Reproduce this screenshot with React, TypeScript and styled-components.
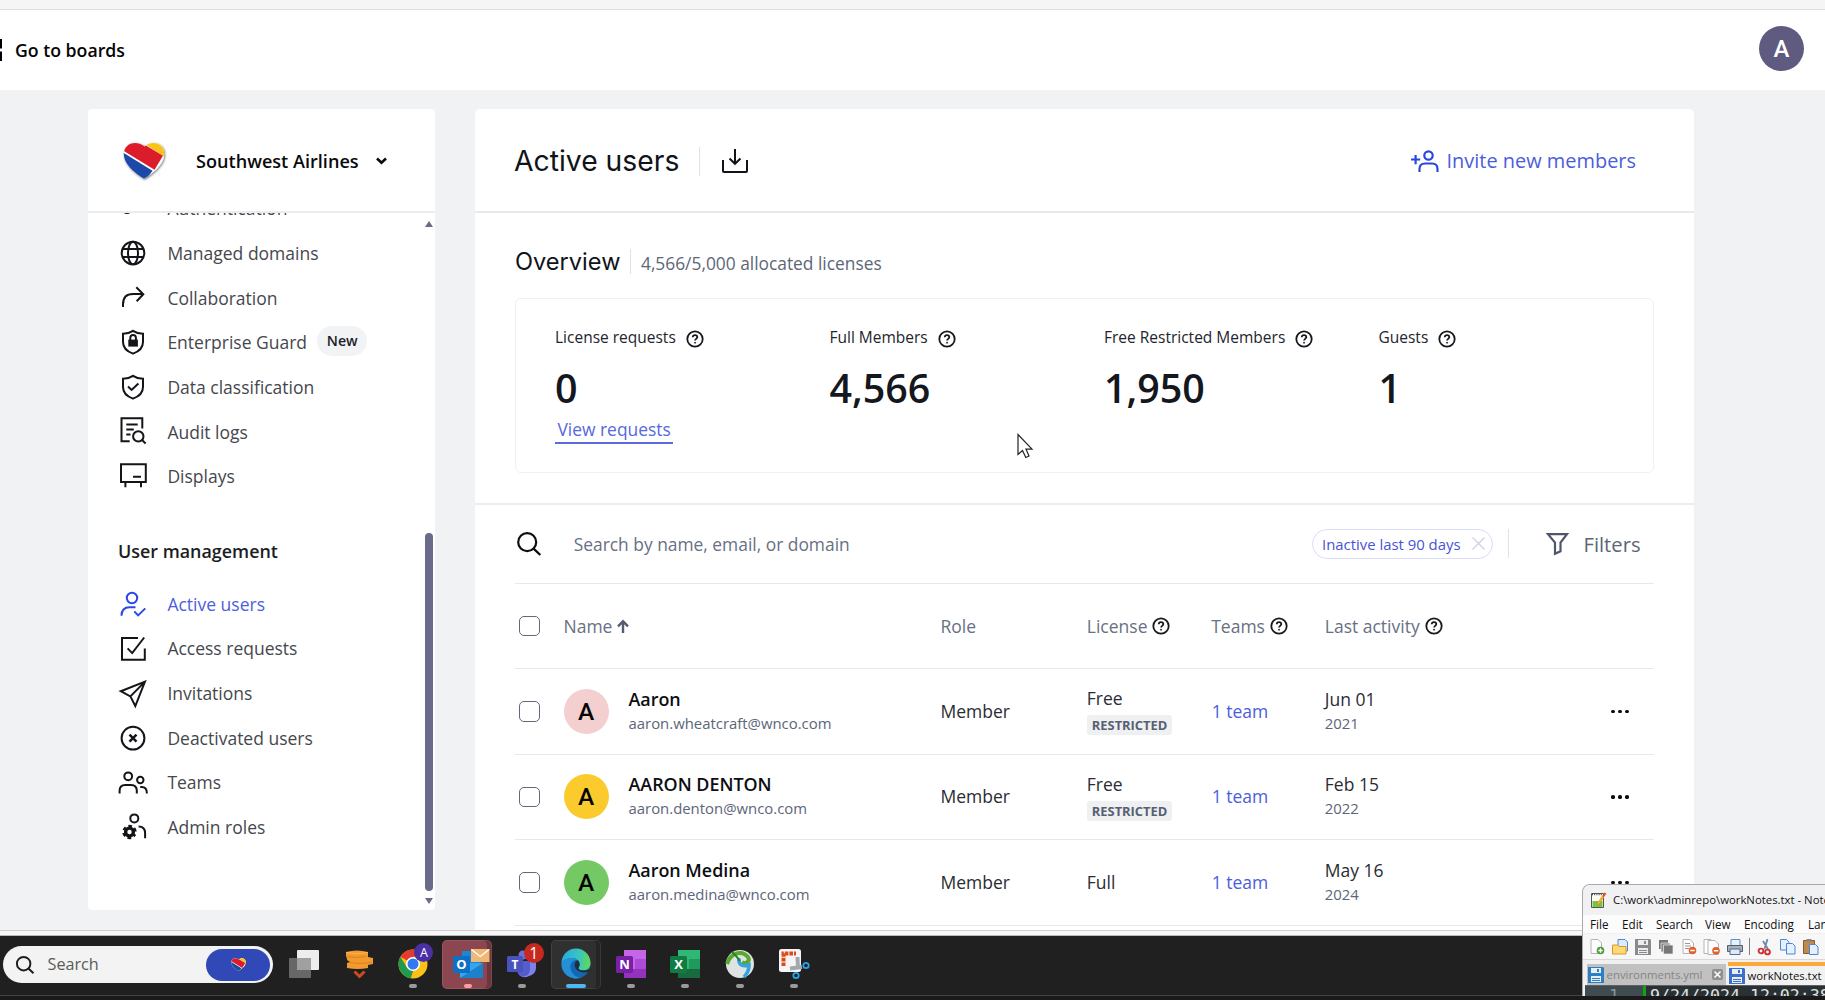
import React from 'react';
import styled, { createGlobalStyle } from 'styled-components';

const Global = createGlobalStyle`
  * { box-sizing: border-box; }
  html, body { margin: 0; padding: 0; overflow: hidden; }
  body {
    font-family: "Open Sans", "Noto Sans", sans-serif;
    font-size: 17.5px;
    line-height: 24px;
    color: #1b1d22;
    white-space: nowrap;
  }
  svg { display: block; flex: none; overflow: visible; }
`;

/* ---------- page shell ---------- */

const Screen = styled.div`
  position: relative;
  width: 1825px;
  height: 1000px;
  overflow: hidden;
  display: flex;
  flex-direction: column;
  background: #f0f2f4;
`;

const BrowserStrip = styled.div`
  flex: none;
  height: 10px;
  background: #f5f5f5;
  border-bottom: 1px solid #dedede;
`;

const TopBar = styled.header`
  flex: none;
  height: 80px;
  background: #fff;
  display: flex;
  align-items: center;
  justify-content: space-between;
  padding-right: 21px;
`;

const BoardsLink = styled.a`
  display: flex;
  align-items: center;
  gap: 13px;
  font-size: 17.7px;
  font-weight: 600;
  color: #050505;
`;

const UserAvatar = styled.div`
  width: 45px;
  height: 45px;
  margin-top: -3px;
  border-radius: 50%;
  background: #5f5a80;
  color: #fff;
  font: 500 24px/46px Roboto, sans-serif;
  text-align: center;
`;

const Workspace = styled.div`
  flex: none;
  height: 840px;
  overflow: hidden;
  display: flex;
  align-items: flex-start;
  gap: 40px;
  padding: 19px 0 0 88px;
`;

const WindowEdge = styled.div`
  flex: none;
  height: 6px;
  background: #f7f7f7;
  border-top: 1px solid #cfcfcf;
  border-bottom: 1px solid #b9b9b9;
`;

/* ---------- sidebar ---------- */

const Sidebar = styled.aside`
  width: 347px;
  height: 801px;
  background: #fff;
  border-radius: 4px;
  display: flex;
  flex-direction: column;
  overflow: hidden;
`;

const OrgHeader = styled.div`
  flex: none;
  height: 104px;
  border-bottom: 2px solid #ececee;
  display: flex;
  align-items: center;
  padding: 2px 0 0 35px;
`;

const OrgName = styled.span`
  margin: 0 17px 0 31px;
  font-size: 18.1px;
  font-weight: 600;
  color: #0a0a0c;
`;

const NavArea = styled.div`
  flex: 1;
  min-height: 0;
  overflow: hidden;
  display: flex;
  justify-content: space-between;
`;

const NavList = styled.nav`
  margin-top: -27px;
  padding-left: 30.7px;
`;

const NavItem = styled.a<{ $active?: boolean }>`
  height: 44.65px;
  display: flex;
  align-items: center;
  gap: 20.7px;
  font-size: 17.5px;
  color: ${p => (p.$active ? '#4c60dc' : '#45474d')};
  svg { color: ${p => (p.$active ? '#2a48e8' : '#141518')}; margin-top: -0.4px; }
`;

const NavHeading = styled.h3`
  margin: 0;
  padding: 41px 0 18px;
  height: 83px;
  font-size: 17.9px;
  line-height: 24px;
  font-weight: 600;
  margin-left: -0.7px;
`;

const NewBadge = styled.span`
  margin: -2px 0 0 -10.5px;
  padding: 0 9px 0 9.5px;
  height: 30px;
  border-radius: 15px;
  background: #f2f3f5;
  font-size: 14.2px;
  line-height: 29px;
  font-weight: 600;
  color: #1a1d28;
`;

const Scrollbar = styled.div`
  width: 10px;
  padding: 8px 2px 6px 0;
  display: flex;
  flex-direction: column;
  align-items: center;
`;

const ScrollTrack = styled.div`
  flex: 1;
  width: 8px;
  display: flex;
  align-items: flex-end;
  padding-bottom: 7px;
`;

const ScrollThumb = styled.div`
  width: 8px;
  height: 358px;
  border-radius: 4px;
  background: #6a6b88;
`;

/* ---------- main panel ---------- */

const Panel = styled.main`
  width: 1219px;
  height: 840px;
  background: #fff;
  border-radius: 5px 5px 0 0;
`;

const PanelHeader = styled.div`
  height: 104px;
  border-bottom: 2px solid #e9e9eb;
  padding: 2px 58px 0 39px;
  display: flex;
  align-items: center;
`;

const Title = styled.h1`
  margin: 0;
  font: 400 28.3px/36px Inter, sans-serif;
  color: #10131a;
`;

const Divider = styled.span<{ $h: number; $l: number; $r: number }>`
  width: 1px;
  height: ${p => p.$h}px;
  margin: 0 ${p => p.$r}px 0 ${p => p.$l}px;
  background: #e0e1e5;
`;

const InviteButton = styled.a`
  margin-left: auto;
  display: flex;
  align-items: center;
  gap: 7.5px;
  font-size: 19.95px;
  color: #4a5edb;
`;

const OverviewHead = styled.div`
  height: 85px;
  padding: 12px 0 0 40px;
  display: flex;
  align-items: center;
  color: #5d6678;
`;

const Subtitle = styled.h2`
  margin: 0;
  font: 400 23.6px/30px Inter, sans-serif;
  color: #10131a;
`;

const Allocated = styled.span`
  padding-top: 2px;
  font-size: 17.35px;
`;

const StatsCard = styled.section`
  margin-left: 39.5px;
  width: 1139px;
  height: 175px;
  border: 1.5px solid #eff0f2;
  border-radius: 6px;
  display: grid;
  grid-template-columns: repeat(4, 274.5px);
  padding: 27px 0 0 39.5px;
`;

const StatLabel = styled.div`
  display: flex;
  align-items: center;
  gap: 10px;
  font-size: 15.5px;
  line-height: 22px;
  color: #22252d;
  svg { margin-top: 3px; }
`;

const StatValue = styled.div`
  margin-top: 13px;
  font-size: 39.4px;
  line-height: 54px;
  font-weight: 600;
  color: #14171d;
`;

const StatLink = styled.a`
  display: inline-block;
  margin-top: 3px;
  height: 26px;
  padding: 0 2px 0 2.5px;
  border-bottom: 2px solid #5a6ae0;
  font-size: 17.4px;
  line-height: 23px;
  color: #5668dd;
`;

const FilterBar = styled.div`
  margin-top: 30px;
  height: 80px;
  padding: 0 0 1px 42px;
  border-top: 2px solid #ededef;
  display: flex;
  align-items: center;
  color: #5d6579;
`;

const Placeholder = styled.span`
  margin-left: 32.7px;
  font-size: 17.4px;
  color: #687083;
`;

const Chip = styled.span`
  margin-left: auto;
  width: 181px;
  height: 30px;
  border: 1.5px solid #dadcf8;
  border-radius: 15px;
  padding-left: 8.5px;
  display: flex;
  align-items: center;
  gap: 11px;
  font-size: 14.9px;
  color: #4753d6;
`;

const FiltersLabel = styled.span`
  margin: 0 53.500px 0 14px;
  font-size: 20.2px;
`;

const Table = styled.div`
  margin-left: 39.5px;
  width: 1139.5px;
`;

const Row = styled.div<{ $head?: boolean }>`
  height: 85.4px;
  border-top: 1.5px solid #e7e8ea;
  display: grid;
  align-items: center;
  grid-template-columns: 49px 377px 146.3px 124.4px 113.6px 1fr;
  color: ${p => (p.$head ? '#687083' : '#2a2c33')};
`;

const Checkbox = styled.span`
  margin-left: 4.5px;
  width: 20.5px;
  height: 20.5px;
  border: 1.6px solid #65667e;
  border-radius: 5px;
`;

const Label = styled.span`
  display: flex;
  align-items: center;
  gap: 5px;
`;

const Cell = styled.span`
  margin-top: -1.5px;
`;

const Person = styled.div`
  display: flex;
  align-items: center;
  gap: 20px;
`;

const Initial = styled.span<{ $bg: string }>`
  width: 45px;
  height: 45px;
  border-radius: 50%;
  background: ${p => p.$bg};
  color: #060606;
  font: 500 24.5px/46px Roboto, sans-serif;
  text-align: center;
`;

const Stack = styled.div`
  display: flex;
  flex-direction: column;
  align-items: flex-start;
  margin-top: -1.5px;
`;

const Name = styled.span`
  font-size: 17.9px;
  font-weight: 600;
  color: #0c0e12;
`;

const Muted = styled.span`
  font-size: 14.9px;
  color: #5c6579;
`;

const Tag = styled.span`
  margin-top: 5px;
  height: 20px;
  padding: 0 5px;
  border-radius: 3px;
  background: #eff0f2;
  font-size: 12.9px;
  line-height: 20px;
  font-weight: 700;
  color: #566072;
`;

const TeamLink = styled.a`
  color: #4a5edc;
  padding-left: 0.5px;
  margin-top: -1.5px;
`;

const LastCell = styled.div`
  display: flex;
  align-items: center;
  justify-content: space-between;
  padding-right: 25.5px;
`;

const Dots = styled.span`
  display: flex;
  gap: 3px;
  i { width: 3.7px; height: 3.7px; border-radius: 50%; background: #0b0b0d; }
`;

/* ---------- taskbar ---------- */

const Taskbar = styled.footer`
  flex: none;
  height: 64px;
  background: #202020;
  display: flex;
  align-items: flex-start;
  padding: 0 0 0 3px;
  border-bottom: 4px solid #1a1a1a;
  box-shadow: inset 0 -1px #444;
`;

const SearchPill = styled.div`
  margin-top: 10px;
  width: 270px;
  height: 37px;
  border-radius: 18.5px;
  background: #f3f3f3;
  display: flex;
  align-items: center;
  padding: 0 3px 0 13px;
  font-size: 16.2px;
  color: #5a5a5a;
  span { margin-left: 13.5px; margin-top: -1px; }
`;

const PillArt = styled.div`
  margin-left: auto;
  width: 64px;
  height: 32px;
  border-radius: 16px;
  background: #3149b6;
  display: flex;
  align-items: center;
  justify-content: center;
`;

const Apps = styled.div`
  display: flex;
  margin: 3px 0 0 4px;
`;

const AppSlot = styled.div<{ $tile?: string }>`
  position: relative;
  width: 54.45px;
  height: 52px;
  display: flex;
  flex-direction: column;
  align-items: center;
  padding: 10px 0 0;
  ${p => p.$tile && `
    &::before {
      content: ''; position: absolute; left: 2px; top: 1px; width: 50px; height: 49px;
      border-radius: 5px; background: ${p.$tile};
      box-shadow: inset 0 0 0 1px rgba(255,255,255,.09), inset -5px 0 rgba(0,0,0,.22);
    }
  `}
  svg { position: relative; }
`;

const Indicator = styled.i<{ $w: number; $c: string }>`
  position: relative;
  margin-top: 5px;
  width: ${p => p.$w}px;
  height: 4px;
  border-radius: 2px;
  background: ${p => p.$c};
`;

const AppBadge = styled.span<{ $bg: string; $x: number; $y: number; $s: number; $f: number }>`
  position: absolute;
  left: ${p => p.$x}px;
  top: ${p => p.$y}px;
  width: ${p => p.$s}px;
  height: ${p => p.$s}px;
  border-radius: 50%;
  background: ${p => p.$bg};
  color: #fff;
  text-align: center;
  font-size: ${p => p.$f}px;
  line-height: ${p => p.$s}px;
`;

/* ---------- floating editor window ---------- */

const EditorWindow = styled.div`
  position: absolute;
  left: 1582px;
  top: 884px;
  width: 400px;
  height: 112px;
  border: 1px solid #a9a9ad;
  border-bottom: 0;
  border-radius: 8px 0 0 0;
  overflow: hidden;
  background: #f0f0f0;
  display: flex;
  flex-direction: column;
  color: #111;
`;

const WinTitle = styled.div`
  flex: none;
  height: 30px;
  background: #f1f1f3;
  display: flex;
  align-items: center;
  gap: 6px;
  padding-left: 7px;
  font-size: 11.35px;
`;

const WinMenu = styled.div`
  flex: none;
  height: 18px;
  background: #fcfcfc;
  display: flex;
  align-items: center;
  padding-left: 7px;
  font-size: 11.7px;
  line-height: 18px;
`;

const MenuItem = styled.span<{ $w: number }>`
  width: ${p => p.$w}px;
`;

const WinTools = styled.div`
  flex: none;
  height: 26px;
  margin-top: 1px;
  background: #f7f7f7;
  border-bottom: 1px solid #d8d8d8;
  display: flex;
  align-items: center;
  gap: 7px;
  padding-left: 6px;
`;

const ToolSeparator = styled.i`
  width: 1px;
  height: 17px;
  background: #808080;
  margin: 0 0 0 -1px;
`;

const WinTabs = styled.div`
  flex: none;
  height: 25px;
  padding: 2px 0 0 3.5px;
  display: flex;
  align-items: flex-end;
  gap: 2px;
`;

const Tab = styled.div<{ $on?: boolean }>`
  flex: none;
  height: ${p => (p.$on ? 23 : 21)}px;
  padding: 0 2.5px 0 1px;
  width: ${p => (p.$on ? 260 : 139)}px;
  border-top: ${p => (p.$on ? '4px solid #fba93b' : '0')};
  background: ${p => (p.$on ? '#f1f1f1' : '#c1c1c1')};
  color: ${p => (p.$on ? '#111' : '#858585')};
  display: flex;
  align-items: center;
  gap: 3px;
  font-size: ${p => (p.$on ? 11.3 : 11.4)}px;
`;

const CloseBox = styled.i`
  margin-left: auto;
  width: 11px;
  height: 11px;
  border-radius: 2px;
  background: #8f8f8f;
  display: grid;
  place-items: center;
`;

const Code = styled.div`
  flex: none;
  height: 12px;
  margin-left: 2px;
  border-top: 1px solid #606060;
  background: #293134;
  overflow: hidden;
  display: flex;
  font: 16.6px/20px "DejaVu Sans Mono", monospace;
  color: #e0e2e4;
`;

const Gutter = styled.span`
  width: 61px;
  border-right: 3px solid #12a312;
  background: #3f4b4e;
  color: #81969a;
  padding-left: 24px;
  margin-right: 4px;
`;

/* ---------- drawings ---------- */

const Icon = ({ children, s = 28, w = 2, h }: { children: React.ReactNode; s?: number; w?: number; h?: number }) => (
  <svg width={s} height={h ?? s} viewBox={`0 0 ${s} ${h ?? s}`} fill="none" stroke="currentColor" strokeWidth={w}>
    {children}
  </svg>
);

const SHIELD = 'M14 2.8C17 4.8 20.5 5.7 24 5.7V14c0 6-4 9.5-10 11.6C8 23.5 4 20 4 14V5.7C7.5 5.7 11 4.8 14 2.8Z';

const icons: Record<string, React.ReactNode> = {
  key: <><circle cx="8" cy="14.5" r="4.6" /><path d="M11 12 21 2" /></>,
  globe: <><circle cx="14" cy="14" r="11.3" /><ellipse cx="14" cy="14" rx="5" ry="11.3" /><path d="M3.4 10h21.2M3.4 18h21.2" /></>,
  share: <path d="M4 24v-2.6C4 14.5 7.6 11 14 11h10.4M17.3 4.3l7 6.9-6.6 7" />,
  guard: <><path d={SHIELD} /><path d="M9.3 11.6h9.6v7H9.3z" fill="currentColor" stroke="none" /><path d="M11.3 12V9.8a2.8 2.8 0 0 1 5.6 0V12" /></>,
  shield: <><path d={SHIELD} /><path d="M9 13.6l3.6 3.4 6.8-6.4" /></>,
  audit: <><path d="M23.3 11.5V1.3H2.5v22.9h8.2M7.3 7.6h11.4M7.3 12.4h7.5M7.3 17.6h4.2" /><circle cx="19.3" cy="19.4" r="5.2" /><path d="M23 23l3.6 3.4" /></>,
  display: <path d="M2 2.2h24.8v17.7H2zM6.4 20v5.2M22 20v5.2M14 14.7h8" />,
  active: <><circle cx="13" cy="8" r="5.2" /><path d="M2.5 25.8c0-5.6 3.1-8.5 8-8.5h6M15.3 21.4l3.8 4 7.2-7" /></>,
  access: <path d="M19 3.9H3v21.9h22.8V14.6M8.6 14.4l4.6 4.7L25.2 3.5" />,
  send: <path d="M26 2.6 1.8 12.2l9.6 5.2 4.9 9.6zM11.4 17.4 26 2.6" />,
  deact: <><circle cx="14" cy="14.2" r="11.4" /><path d="M10.5 10.7l7 7M17.5 10.7l-7 7" strokeWidth="2.5" /></>,
  teams: <><circle cx="9.2" cy="8.3" r="3.9" /><path d="M.6 25.4v-2.6c0-3.7 2.2-5.9 5.6-5.9h6c3.4 0 5.6 2.2 5.6 5.9v2.6" /><circle cx="21.3" cy="12" r="3.2" /><path d="M21.2 19h1.4c3.4 0 5.3 2.2 5.3 6.4" /></>,
  admin: <><circle cx="15.3" cy="5.4" r="4" /><path d="M19.6 13.4c4.4 0 6.5 2.2 6.5 6.6v5.2" /><circle cx="10.5" cy="19" r="3.9" strokeWidth="3.4" /><circle cx="10.5" cy="19" r="6" strokeWidth="2.4" strokeDasharray="3.5 2.783" strokeDashoffset="1.75" transform="rotate(30 10.5 19)" /></>,
};

const Heart = ({ w }: { w: number }) => (
  <svg width={w} height={w * 0.9} viewBox="0 0 42 37.5">
    <defs>
      <clipPath id={`heart${w}`}>
        <path d="M21 36.500C14 32 1.500 23.500 .8 12.500 .6 5.500 5.500 .8 12 .8c3.800 0 7 1.200 9.500 3.600C24 2 27 .8 30.500 .8c6 0 10.800 4.200 10.700 11.200C41 23.500 28 32 21 36.500Z" />
      </clipPath>
      <filter id={`shade${w}`} x="-20%" y="-20%" width="140%" height="140%">
        <feDropShadow dx=".8" dy=".9" stdDeviation=".8" floodColor="#555" floodOpacity=".8" />
      </filter>
    </defs>
    <g filter={`url(#shade${w})`}>
      <g clipPath={`url(#heart${w})`}>
        <path fill="#fff" d="M0 0h42v38H0z" />
        <path fill="#fbc314" d="M16-2h28v18L22 2z" />
        <path fill="#dc1f2b" d="M-4-4h20L22.500 3 40 13.500 31.500 27.500 0 8.300z" />
        <path fill="#1c49a8" d="M-2 9 29.500 28.500 21 40-3 28z" />
      </g>
    </g>
  </svg>
);

const Help = ({ s = 18 }: { s?: number }) => (
  <svg width={s} height={s} viewBox="0 0 18 18" fill="none" stroke="#16181c" strokeWidth="1.8">
    <circle cx="9" cy="9" r="7.7" />
    <path d="M6.700 7.300c.1-1.400 1-2.200 2.300-2.200s2.300.8 2.300 2c0 1.700-2.200 1.800-2.200 3.400" />
    <circle cx="9.050" cy="12.700" r=".55" fill="#16181c" strokeWidth=".9" />
  </svg>
);

const Magnifier = ({ s, c = '#0c0d10', w = 2.2 }: { s: number; c?: string; w?: number }) => (
  <svg width={s} height={s} viewBox="0 0 24 24" fill="none" stroke={c} strokeWidth={w}>
    <circle cx="10.200" cy="10.200" r="9" />
    <path d="M16.600 16.600 23.300 23" />
  </svg>
);

const Triangle = ({ down }: { down?: boolean }) => (
  <svg width="8" height="6" viewBox="0 0 8 6"><path fill="#6a6b88" d={down ? 'M0 0h8L4 6z' : 'M0 6h8L4 0z'} /></svg>
);

const OfficeIcon = ({ letter, a, b, c, d }: { letter: string; a: string; b: string; c: string; d: string }) => (
  <svg width="30" height="30" viewBox="0 0 30 30">
    <path fill={b} d="M8 1h22v28H8z" /><path fill={c} d="M19 10h11v10H19z" /><path fill={d} d="M8 20h22v9H8z" />
    <rect y="7" width="17" height="17" rx="1.500" fill={a} />
    <text x="8.500" y="20" textAnchor="middle" fontSize="13" fontWeight="700" fill="#fff">{letter}</text>
  </svg>
);

const taskIcons = {
  view: <svg width="30" height="30" viewBox="0 0 30 30"><rect x="8" y="1" width="22" height="20" rx="1" fill="#ededed" /><rect x="0" y="9" width="22" height="20" rx="1" fill="#6f6f6f" opacity=".9" /><path fill="#a0a0a0" d="M8 9h14v12H8z" /></svg>,
  stack: <svg width="30" height="30" viewBox="0 0 30 30"><path fill="#f29a2e" d="M2 3q11-3 22 0v5l5 1v6l-5 1v3q-10 2-21 0v-5l3-1-3-2V9l-1-1z" /><path d="M2 7.500q9 2 20 0M5 13.500q12 2 23 0" stroke="#d98220" strokeWidth="1" fill="none" /><path d="M2 3.500q11 2.500 22 0" stroke="#ffb551" fill="none" /><path d="m10.500 22.500 5 5 5-5" stroke="#cf4a1c" strokeWidth="3" fill="none" /></svg>,
  chrome: <svg width="30" height="30" viewBox="0 0 30 30"><circle cx="15" cy="15" r="14.500" fill="#fbc116" /><path fill="#e33b2e" d="M15 15 2.400 7.800A14.500 14.500 0 0 1 27.600 7.800H15z" /><path fill="#229a4c" d="M2.400 7.800 9 18.500l6 3.500-2.200 7.300A14.500 14.500 0 0 1 2.400 7.800z" /><circle cx="15" cy="15" r="7" fill="#fff" /><circle cx="15" cy="15" r="5.500" fill="#2f7af0" /></svg>,
  outlook: <svg width="30" height="30" viewBox="0 0 30 30"><path fill="#1a86d6" d="M9 2h18v12H9z" /><path fill="#32a7ec" d="M7 14h23v15H7z" /><path fill="#1474c0" d="m7 29 23-15v15z" opacity=".75" /><rect y="7" width="17" height="17" rx="1.500" fill="#0f6fc4" /><text x="8.500" y="20" textAnchor="middle" fontSize="13" fontWeight="700" fill="#fff">O</text><path fill="#efb877" d="M18 0h18.500v13H18z" /><path d="m18.500.500 8.700 7 8.800-7" stroke="#fff" strokeWidth="1.300" fill="none" /></svg>,
  teams: <svg width="30" height="30" viewBox="0 0 30 30"><circle cx="16" cy="6" r="4.500" fill="#6b70d8" /><path fill="#7b83eb" d="M10 12h19v7a8 8 0 0 1-7 8q-5 3-10-1z" /><path fill="#565dc8" d="M10 12h13v9q-1 6-7 6.500-6-1-6-7z" /><rect y="7" width="16" height="16" rx="1.500" fill="#4a52bd" /><text x="8" y="19.500" textAnchor="middle" fontSize="12" fontWeight="700" fill="#fff">T</text></svg>,
  edge: <svg width="30" height="30" viewBox="0 0 30 30"><defs><linearGradient id="edgeTop" x1="0" x2="1" y1=".3" y2=".4"><stop stopColor="#2aa7e0" /><stop offset=".6" stopColor="#38c5c0" /><stop offset="1" stopColor="#62d957" /></linearGradient></defs><circle cx="15" cy="15" r="14.500" fill="#1467b3" /><path fill="url(#edgeTop)" d="M.5 14A14.500 14.500 0 0 1 29.500 14c0 5-3.500 7.500-7.500 7.500-3 0-4.500-1.200-4.500-2.300 0-1 1.200-1.500 1.200-3.700C18.700 12 15.500 9 11 9 6 9 2 11.500.5 14z" /><path fill="#2390d8" d="M.5 14C2 11.500 6 9 11 9c2 0 4 .7 5.300 1.800C11 11 9 15.500 9.500 19c.6 5 4.500 9 10 9.800A14.500 14.500 0 0 1 .5 14z" /><path fill="#202020" d="M17.500 19.200c0-1 1.200-1.500 1.200-3.700 0-1.500-.6-3-1.700-4.200-3 .7-4 4.200-3 6.700 1.300 4.500 8.500 7 14.500 4.500l1-2.500c-2 .8-11 3-12-.8z" opacity=".8" /></svg>,
  globe: <svg width="30" height="30" viewBox="0 0 30 30"><circle cx="15" cy="15" r="14" fill="#dfe3e2" /><path d="M2 15C6 3 17 1 23 8c2.500 4-2 8-6 5" fill="none" stroke="#5aa82c" strokeWidth="4" /><path d="M14 9c-1 7 4 9 10 7 0 5-2 9-5 12" fill="none" stroke="#35a4de" strokeWidth="3.600" /><path d="M7 3q4 3 8 9" stroke="#2f7d24" strokeWidth="2" fill="none" /></svg>,
  snip: <svg width="30" height="30" viewBox="0 0 30 30"><rect width="22" height="23" rx="2.500" fill="#f5f5f5" /><path d="M4.500 17V4.500H17" fill="none" stroke="#dd4a1d" strokeWidth="4" strokeDasharray="3.600 1" /><path d="m18.500 8 .5 12M11 19.500l12-1.500" stroke="#a3a8ad" strokeWidth="4" /><circle cx="17" cy="26.500" r="2.700" fill="none" stroke="#2ba3e8" strokeWidth="1.800" /><circle cx="27" cy="16.500" r="2.700" fill="none" stroke="#2ba3e8" strokeWidth="1.800" /></svg>,
};

const Tool = ({ children }: { children: React.ReactNode }) => <svg width="16" height="16" viewBox="0 0 16 16">{children}</svg>;
const Page = ({ x = 2, y = 0 }: { x?: number; y?: number }) => <path d={`M${x} ${y + 0.5}h7l3.500 3.500v10.500h-10.500z`} fill="#fdfdfd" stroke="#b4b4b4" />;
const Floppy = ({ c }: { c: string }) => <Tool><path fill={c} d="M0 0h15l1 1v15H0z" /><path fill="#e9edf2" d="M3 1h10v5H3zM3 9h10v6H3z" /><path fill={c} d="M9 2h2v3H9zM4 11h8v1H4zM4 13h8v1H4z" /></Tool>;

const tools = [
  <Tool><Page /><circle cx="11.500" cy="11.500" r="3.800" fill="#4b9b3d" /><path d="M11.500 9.300v4.400M9.300 11.500h4.400" stroke="#fff" strokeWidth="1.300" /></Tool>,
  <Tool><path d="M6 .5h7l2.500 2.500v9H6z" fill="#dceafb" stroke="#4f86d0" /><path d="M.5 6h5l1.500 1.500h7V15H.5z" fill="#ffd978" stroke="#d89b1d" /></Tool>,
  <Floppy c="#8a8a8a" />,
  <Tool><path d="M1 1h9v9H1z" fill="#777" /><path d="M3 4h9v9H3z" fill="#8a8a8a" stroke="#eee" strokeWidth=".7" /><path d="M5.500 6h9.500v9H5.500z" fill="#777" stroke="#eee" strokeWidth=".7" /></Tool>,
  <Tool><Page /><path d="M4 4.500h5M4 7h6M4 9.500h4" stroke="#999" /><circle cx="11.500" cy="11.500" r="3.800" fill="#e2602a" /><path d="M9.300 11.500h4.400" stroke="#fff" strokeWidth="1.500" /></Tool>,
  <Tool><Page x={0} /><Page x={4} y={1} /><circle cx="12" cy="11.800" r="3.800" fill="#e2602a" /><path d="M9.800 11.800h4.400" stroke="#fff" strokeWidth="1.500" /></Tool>,
  <Tool><path d="M4 .5h9v6H4z" fill="#e7f1ff" stroke="#5f8fc9" /><path d="M.5 6.500h15v6H.5z" fill="#a9b0b8" stroke="#555d66" /><path d="M3 10h10v5.500H3z" fill="#dfe9f8" stroke="#4f6f9c" /></Tool>,
];
const editTools = [
  <Tool><path d="m10.500 0-3 10M6 2l5 8" stroke="#6d88ad" strokeWidth="1.800" /><circle cx="4" cy="12" r="2.400" fill="none" stroke="#cf3030" strokeWidth="1.900" /><circle cx="10.500" cy="13" r="2.400" fill="none" stroke="#cf3030" strokeWidth="1.900" /></Tool>,
  <Tool><path d="M.5.500h6l2.500 2.500v8H.5z" fill="#e4efff" stroke="#4f86d0" /><path d="M6.500 4.500h6l2.500 2.500v8H6.500z" fill="#e4efff" stroke="#4f86d0" /></Tool>,
  <Tool><path d="M.5 1.500h11v13H.5z" fill="#c08a4c" stroke="#8a5a28" /><path d="M3.500 0h5v3h-5z" fill="#888" /><path d="M6.500 5.500h6l2.500 2.500v7.500H6.500z" fill="#e4efff" stroke="#4f86d0" /></Tool>,
];

/* ---------- data ---------- */

const security = [
  ['key', 'Authentication'], ['globe', 'Managed domains'], ['share', 'Collaboration'], ['guard', 'Enterprise Guard'],
  ['shield', 'Data classification'], ['audit', 'Audit logs'], ['display', 'Displays'],
];
const management = [
  ['active', 'Active users'], ['access', 'Access requests'], ['send', 'Invitations'],
  ['deact', 'Deactivated users'], ['teams', 'Teams'], ['admin', 'Admin roles'],
];
const stats = [
  ['License requests', '0'], ['Full Members', '4,566'], ['Free Restricted Members', '1,950'], ['Guests', '1'],
];
const users = [
  { name: 'Aaron', email: 'aaron.wheatcraft@wnco.com', bg: '#f3cfd0', license: 'Free', restricted: true, date: 'Jun 01', year: '2021' },
  { name: 'AARON DENTON', email: 'aaron.denton@wnco.com', bg: '#fbca2c', license: 'Free', restricted: true, date: 'Feb 15', year: '2022' },
  { name: 'Aaron Medina', email: 'aaron.medina@wnco.com', bg: '#74c965', license: 'Full', restricted: false, date: 'May 16', year: '2024' },
];

const Cursor = styled.svg`
  position: absolute;
  left: 1017px;
  top: 433px;
`;

export default function App() {
  return (
    <Screen>
      <Global />
      <BrowserStrip />
      <TopBar>
        <BoardsLink>
          <svg width="2" height="22" viewBox="0 0 2 22"><path d="M0 0h2v9.500H0zM0 12.500h2V22H0z" /></svg>
          Go to boards
        </BoardsLink>
        <UserAvatar>A</UserAvatar>
      </TopBar>
      <Workspace>
        <Sidebar>
          <OrgHeader>
            <Heart w={42} />
            <OrgName>Southwest Airlines</OrgName>
            <svg width="11" height="8" viewBox="0 0 11 8" fill="none" stroke="#0a0a0c" strokeWidth="2.6"><path d="m1 1.500 4.500 4.300L10 1.500" /></svg>
          </OrgHeader>
          <NavArea>
            <NavList>
              {security.map(([icon, text]) => (
                <NavItem key={text}>
                  <Icon>{icons[icon]}</Icon>{text}
                  {icon === 'guard' && <NewBadge>New</NewBadge>}
                </NavItem>
              ))}
              <NavHeading>User management</NavHeading>
              {management.map(([icon, text]) => (
                <NavItem key={text} $active={icon === 'active'}><Icon>{icons[icon]}</Icon>{text}</NavItem>
              ))}
            </NavList>
            <Scrollbar>
              <Triangle />
              <ScrollTrack><ScrollThumb /></ScrollTrack>
              <Triangle down />
            </Scrollbar>
          </NavArea>
        </Sidebar>

        <Panel>
          <PanelHeader>
            <Title>Active users</Title>
            <Divider $h={29} $l={20} $r={21.5} />
            <Icon s={26} h={24} w={2}><path d="M1 11v11q0 1 1 1h22q1 0 1-1V11M13 0v14.500M7.500 9.500l5.500 5.300 5.500-5.300" stroke="#111318" /></Icon>
            <InviteButton>
              <Icon s={28} h={22} w={2.2}><g stroke="#2a46e2"><path d="M0 9.500h9.200M4.600 5v9.200M8.500 22v-3c0-3.600 2-5.500 5.500-5.500h7c3.500 0 5.500 1.900 5.500 5.500v3" /><circle cx="17.500" cy="5.500" r="4.200" /></g></Icon>
              Invite new members
            </InviteButton>
          </PanelHeader>
          <OverviewHead>
            <Subtitle>Overview</Subtitle>
            <Divider $h={25} $l={10} $r={9.5} />
            <Allocated>4,566/5,000 allocated licenses</Allocated>
          </OverviewHead>
          <StatsCard>
            {stats.map(([label, value], i) => (
              <div key={label}>
                <StatLabel>{label}<Help /></StatLabel>
                <StatValue>{value}</StatValue>
                {i === 0 && <StatLink>View requests</StatLink>}
              </div>
            ))}
          </StatsCard>
          <FilterBar>
            <Magnifier s={24} />
            <Placeholder>Search by name, email, or domain</Placeholder>
            <Chip>
              Inactive last 90 days
              <svg width="13" height="13" viewBox="0 0 13 13" stroke="#cfd1ec" strokeWidth="1.400"><path d="m.5.500 12 12M12.500.500l-12 12" /></svg>
            </Chip>
            <Divider $h={29} $l={15} $r={37} />
            <svg width="23" height="22" viewBox="0 0 23 22" fill="none" stroke="#4f566c" strokeWidth="2.200"><path d="M2 1.200h19L14.500 9.600v8.600l-5.500 2.500V9.600z" /></svg>
            <FiltersLabel>Filters</FiltersLabel>
          </FilterBar>
          <Table>
            <Row $head>
              <Checkbox />
              <Label>
                Name
                <svg width="12" height="13" viewBox="0 0 12 13" fill="none" stroke="#555c70" strokeWidth="2.400"><path d="M6 13V1.500M1 6.300l5-5 5 5" /></svg>
              </Label>
              <Label>Role</Label>
              <Label>License <Help /></Label>
              <Label>Teams <Help /></Label>
              <Label>Last activity <Help /></Label>
            </Row>
            {users.map(u => (
              <Row key={u.name}>
                <Checkbox />
                <Person>
                  <Initial $bg={u.bg}>A</Initial>
                  <Stack><Name>{u.name}</Name><Muted>{u.email}</Muted></Stack>
                </Person>
                <Cell>Member</Cell>
                <Stack>{u.license}{u.restricted && <Tag>RESTRICTED</Tag>}</Stack>
                <TeamLink>1 team</TeamLink>
                <LastCell>
                  <Stack>{u.date}<Muted>{u.year}</Muted></Stack>
                  <Dots><i /><i /><i /></Dots>
                </LastCell>
              </Row>
            ))}
            <Row />
          </Table>
        </Panel>
      </Workspace>
      <WindowEdge />

      <Taskbar>
        <SearchPill>
          <Magnifier s={18} c="#1c1c1c" w={2.6} />
          <span>Search</span>
          <PillArt><Heart w={15} /></PillArt>
        </SearchPill>
        <Apps>
          <AppSlot>{taskIcons.view}</AppSlot>
          <AppSlot>{taskIcons.stack}</AppSlot>
          <AppSlot>{taskIcons.chrome}<Indicator $w={8} $c="#9a9a9a" /><AppBadge $bg="#4a2fa5" $x={28.5} $y={4} $s={19} $f={12.5}>A</AppBadge></AppSlot>
          <AppSlot $tile="#8c4650">{taskIcons.outlook}<Indicator $w={8} $c="#ff9aa5" /></AppSlot>
          <AppSlot>{taskIcons.teams}<Indicator $w={8} $c="#9a9a9a" /><AppBadge $bg="#c8281e" $x={29} $y={4} $s={20} $f={16}>1</AppBadge></AppSlot>
          <AppSlot $tile="#303030">{taskIcons.edge}<Indicator $w={20} $c="#4db8f5" /></AppSlot>
          <AppSlot><OfficeIcon letter="N" a="#7a1fa8" b="#c666e6" c="#ae4bd5" d="#9332bf" /><Indicator $w={8} $c="#9a9a9a" /></AppSlot>
          <AppSlot><OfficeIcon letter="X" a="#107c41" b="#2fb873" c="#1f9a5c" d="#1a6a40" /><Indicator $w={8} $c="#9a9a9a" /></AppSlot>
          <AppSlot>{taskIcons.globe}<Indicator $w={8} $c="#9a9a9a" /></AppSlot>
          <AppSlot>{taskIcons.snip}<Indicator $w={8} $c="#9a9a9a" /></AppSlot>
        </Apps>
      </Taskbar>

      <Cursor width="17" height="26" viewBox="0 0 17 26"><path d="M1 1.500v20l4.500-4 3.300 7 3.200-1.500-3-6.800h6z" fill="#fff" stroke="#222" strokeWidth="1.200" /></Cursor>

      <EditorWindow>
        <WinTitle>
          <svg width="17" height="17" viewBox="0 0 17 17"><path d="M1.500 1.500h12v14h-12z" fill="#fbfbf4" stroke="#555" /><path d="M2.500 9h10v6h-10z" fill="#7cc142" /><path d="M2 2.500h11" stroke="#444" strokeDasharray="1 1.200" strokeWidth="1.500" /><path d="m8 12 7.500-11" stroke="#d9531e" strokeWidth="2.200" /><path d="m8 12 5-7.300" stroke="#f3b229" strokeWidth="2.200" /></svg>
          C:\work\adminrepo\workNotes.txt - Notepad++
        </WinTitle>
        <WinMenu>
          <MenuItem $w={32}>File</MenuItem><MenuItem $w={34}>Edit</MenuItem><MenuItem $w={49}>Search</MenuItem>
          <MenuItem $w={39}>View</MenuItem><MenuItem $w={64}>Encoding</MenuItem><MenuItem $w={60}>Language</MenuItem>
        </WinMenu>
        <WinTools>
          {tools.map((t, i) => <React.Fragment key={i}>{t}</React.Fragment>)}
          <ToolSeparator />
          {editTools.map((t, i) => <React.Fragment key={i}>{t}</React.Fragment>)}
        </WinTools>
        <WinTabs>
          <Tab>
            <Floppy c="#2c7fc4" />environments.yml
            <CloseBox><svg width="7" height="7" viewBox="0 0 7 7" stroke="#fff" strokeWidth="1.500"><path d="m.5.500 6 6M6.500.500l-6 6" /></svg></CloseBox>
          </Tab>
          <Tab $on><Floppy c="#3b6fc9" />workNotes.txt</Tab>
        </WinTabs>
        <Code><Gutter>1</Gutter>9/24/2024 12:02:38</Code>
      </EditorWindow>
    </Screen>
  );
}
